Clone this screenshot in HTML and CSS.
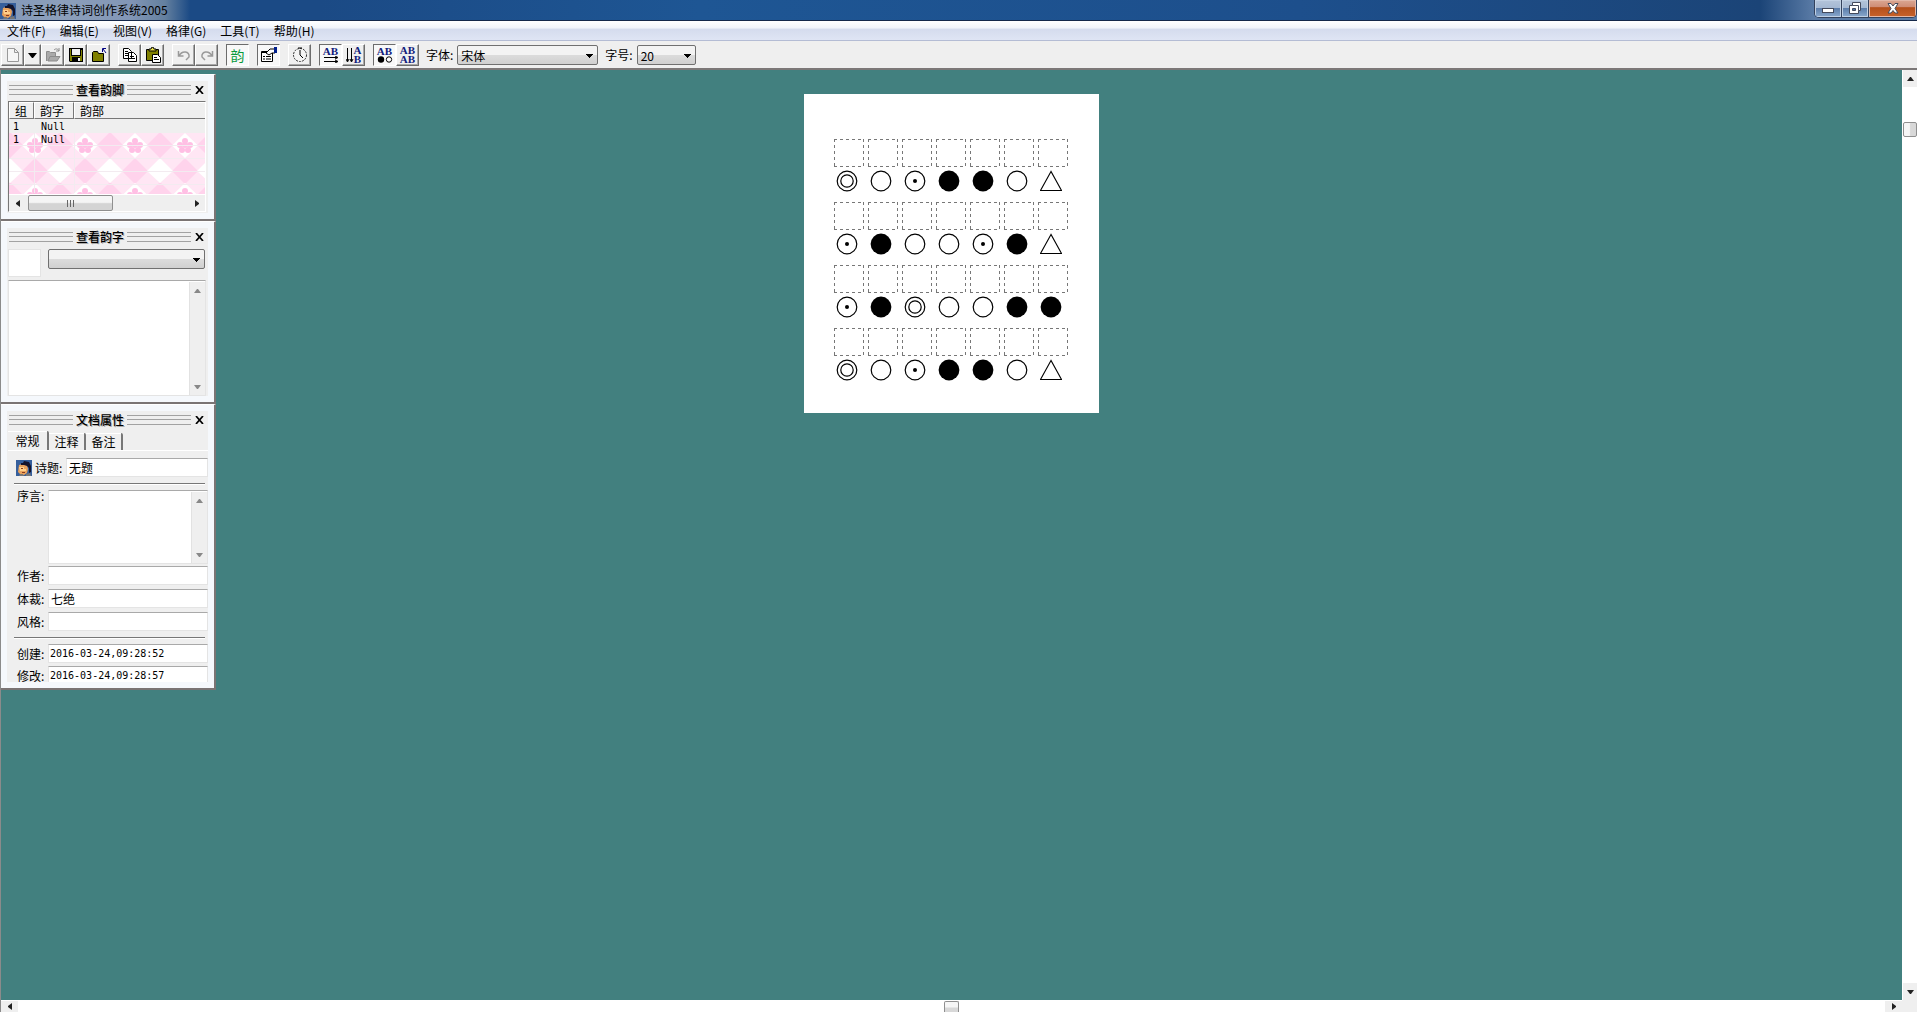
FILE: index.html
```html
<!DOCTYPE html>
<html lang="zh-CN">
<head>
<meta charset="utf-8">
<title>诗圣格律诗词创作系统2005</title>
<link rel="stylesheet" href="styles.css">
</head>
<body>
<svg class="defs" aria-hidden="true">
  <symbol id="poet" viewBox="0 0 16 16"><path fill="#365f9c" d="M0 0h16v16H0z"/><path fill="#e9a25c" d="M3 5l3-1 5 1 1 4-1 4-3 2H5l-3-3z"/><path fill="#ffd08a" d="M3 7h5v2h2v2H4z"/><path fill="#14142c" d="M5 3l2 0 1-2 5 1 2 4v6l-2 1V8l-2-2-3-1-3 0z"/><path fill="#8a3c1e" d="M5 8h2v1H5zM6 12h3v1H6z"/><path fill="#777" d="M4 14h3l1 2H3zM10 14l4-1 1 3h-5z"/></symbol>
  <symbol id="up" viewBox="0 0 7 4"><path d="M3 0h1l3 4H0z"/></symbol>
  <symbol id="down" viewBox="0 0 7 4"><path d="M0 0h7L4 4H3z"/></symbol>
  <symbol id="left" viewBox="0 0 4 7"><path d="M4 0v7L0 4V3z"/></symbol>
  <symbol id="right" viewBox="0 0 4 7"><path d="M0 0v7l4-3V3z"/></symbol>
  <symbol id="x" viewBox="0 0 9 8"><path fill="none" stroke="#000" stroke-width="1.700" d="M1 0l7 8M8 0L1 8"/></symbol>
  <symbol id="ring" viewBox="0 0 22 22"><circle cx="11" cy="11" r="9.800" fill="none" stroke="#000" stroke-width="1.200"/></symbol>
  <symbol id="double" viewBox="0 0 22 22"><g fill="none" stroke="#000" stroke-width="1.200"><circle cx="11" cy="11" r="9.800"/><circle cx="11" cy="11" r="6.200"/></g></symbol>
  <symbol id="dot" viewBox="0 0 22 22"><circle cx="11" cy="11" r="9.800" fill="none" stroke="#000" stroke-width="1.200"/><circle cx="11" cy="11" r="2"/></symbol>
  <symbol id="full" viewBox="0 0 22 22"><circle cx="11" cy="11" r="10.400"/></symbol>
  <symbol id="tri" viewBox="0 0 22 22"><path d="M11 1.500L.5 20.500h21z" fill="none" stroke="#000" stroke-width="1.100"/></symbol>
</svg>

<div class="app">
  <header class="titlebar">
    <svg class="ic16"><use href="#poet"/></svg>
    <h1>诗圣格律诗词创作系统2005</h1>
    <div class="winbtns">
      <button class="min" aria-label="最小化"><svg width="12" height="6"><rect x=".5" y=".5" width="11" height="4" fill="#fff" stroke="#444a5c"/></svg></button>
      <button class="max" aria-label="还原"><svg width="13" height="13"><path fill="#fff" stroke="#444a5c" d="M3.500.500h8v8h-2v3h-9v-8h3z"/><path fill="none" stroke="#444a5c" d="M3.500 3.500h6v5"/><path fill="#4a78b0" stroke="#444a5c" d="M3.500 6.500h3v2h-3z"/></svg></button>
      <button class="cls" aria-label="关闭"><svg width="12" height="11"><path fill="#fff" stroke="#444a5c" d="M1 .5h3l2 2.500 2-2.500h3L8 5.500l3 4.500H8L6 7.500 4 10H1l3-4.500z"/></svg></button>
    </div>
  </header>

  <nav class="menu">
    <button>文件(F)</button><button>编辑(E)</button><button>视图(V)</button><button>格律(G)</button><button>工具(T)</button><button>帮助(H)</button>
  </nav>

  <div class="toolbar">
    <div class="group">
      <button class="tb" aria-label="新建"><svg width="16" height="16"><path d="M2.500 1.500h7l4 4v9h-11zM9.500 1.500v4h4" fill="#f6f6f6" stroke="#999"/></svg></button>
      <button class="tb narrow" aria-label="新建类型"><svg width="9" height="5"><path d="M0 0h9L5 5H4z"/></svg></button>
      <button class="tb" aria-label="打开"><svg width="16" height="16"><path d="M1 14V5h4l1 1h5v3h4l-3 5z" fill="#aaa"/><path d="M1.500 14V4.500h3l1 1h5V9M3 14l2-4.500h10L12 14zM9 3c2-2 4-1 5 1m0-3v3h-3" fill="none" stroke="#8c8c8c"/></svg></button>
      <button class="tb" aria-label="保存"><svg width="16" height="16"><path d="M1 1h14v14H2l-1-1z"/><path fill="#808000" d="M2 2h1v7h10V3h1v11h-2v-4H4v4H2z"/><path fill="#efefef" d="M4 2h8v6H4z"/><path fill="#efefef" d="M10 11h2v3h-2z"/></svg></button>
      <button class="tb" aria-label="关闭文档"><svg width="16" height="16"><path fill="#808000" stroke="#000" d="M1.500 14.500v-9l1-1h4l1 2h5v8z"/><path d="M15 6l-3-4M11.500 5V1.500H15" fill="none" stroke="#000080"/></svg></button>
    </div>
    <div class="group">
      <button class="tb" aria-label="复制"><svg width="16" height="16"><path d="M1.500 1.500h5l3 3v7h-8zM6.500 5.500h5l3 3v6h-8z" fill="#fff" stroke="#000"/><path d="M3 4.500h3M3 6.500h3M3 8.500h3M8 9.500h4M8 11.500h5" stroke="#000"/></svg></button>
      <button class="tb" aria-label="粘贴"><svg width="16" height="16"><path d="M1.500 2.500h12v11h-12z" fill="#808000" stroke="#000"/><path d="M4 4V2h2l1-2h1l1 2h2v2z" fill="#e7e04a" stroke="#000"/><path d="M7.500 7.500h5l3 3v5h-8z" fill="#fff" stroke="#000"/><path d="M9 10.500h3M9 12.500h5" stroke="#000"/></svg></button>
    </div>
    <div class="group">
      <button class="tb" aria-label="撤销"><svg width="16" height="16"><path d="M2.500 4v5h5M3 9c3-6 11-5 10 1l-3 3" fill="none" stroke="#999" stroke-width="1.500"/></svg></button>
      <button class="tb" aria-label="重做"><svg width="16" height="16"><path d="M13.500 4v5h-5M13 9C10 3 2 4 3 10l3 3" fill="none" stroke="#999" stroke-width="1.500"/></svg></button>
    </div>
    <div class="group"><button class="tb on rhyme">韵</button></div>
    <div class="group"><button class="tb on" aria-label="属性"><svg width="18" height="16"><path d="M1.500 4.500h11v10h-11z" fill="#fff" stroke="#000"/><path d="M1 5.500h12M3 9.500h2M6 9.500h5M3 12h2M6 12h5" stroke="#000"/><path d="M6 6l4-4h5v4h-3l-3 2z" fill="#fff" stroke="#000"/><path fill="#001e8c" d="M14 0h3v6h-3z"/></svg></button></div>
    <div class="group"><button class="tb" aria-label="时间"><svg width="16" height="16"><circle cx="8" cy="8" r="6.500" fill="#f4f4f4" stroke="#333" stroke-dasharray="2 1"/><path d="M8 3v5l3 3M6 1h4" fill="none" stroke="#000"/></svg></button></div>
    <div class="group">
      <button class="tb on ab" aria-label="横排"><span>AB</span><svg width="16" height="7"><path d="M1 1.500h13M1 5.500h13M12 0l3 1.500L12 3M12 4l3 1.500L12 7" fill="none" stroke="#000"/></svg></button>
      <button class="tb ab side" aria-label="竖排"><svg width="8" height="16"><path d="M1.500 1v13M5.500 1v13M0 12l1.500 3L3 12M4 12l1.500 3L7 12" fill="none" stroke="#000"/></svg><span>A<br>B</span></button>
    </div>
    <div class="group">
      <button class="tb on ab" aria-label="显示格律"><span>AB</span><svg width="16" height="7"><circle cx="4" cy="3.500" r="3.200"/><circle cx="12" cy="3.500" r="2.700" fill="#fff" stroke="#000"/></svg></button>
      <button class="tb ab" aria-label="仅显示文字"><span>AB<br>AB</span></button>
    </div>
    <label for="font">字体:</label>
    <select id="font" class="combo font"><option>宋体</option></select>
    <label for="size">字号:</label>
    <select id="size" class="combo size"><option>20</option></select>
  </div>

  <main class="work">
    <div class="canvas">
      <article class="sheet" id="sheet"></article>
    </div>

    <aside class="dock">
      <section class="panel">
        <div class="inner first">
          <header class="cap"><i></i><h2>查看韵脚</h2><i></i><button aria-label="关闭"><svg width="9" height="8"><use href="#x"/></svg></button></header>
          <div class="list">
            <div class="view">
              <svg class="paper" aria-hidden="true">
                <pattern id="pink" width="50" height="50" x="1" y="0" patternUnits="userSpaceOnUse">
                  <path fill="#ffe6f4" d="M0 0h50v50H0z"/>
                  <path fill="#ffd3ec" d="M0-1l13 13L0 25zM50-1L37 12l13 13zM25 25l13 13-13 13-13-13z"/>
                  <path fill="#fff" d="M25 0l13 12.500L25 25 12 12.500zM0 25l13 13L0 50zM50 25L37 38l13 12z"/>
                  <g fill="#ffbfe4"><circle cx="25" cy="8" r="3"/><circle cx="20" cy="12" r="3"/><circle cx="30" cy="12" r="3"/><circle cx="22" cy="17" r="3"/><circle cx="28" cy="17" r="3"/><circle cx="25" cy="12" r="3"/></g>
                </pattern>
                <rect width="100%" height="100%" fill="url(#pink)"/>
                <path d="M0 12.500h200M0 25.500h200M0 38.500h200M0 51.500h200M25.500 0v60M65.500 0v60" stroke="#f3ebf0"/>
              </svg>
              <table>
                <thead><tr><th class="c1">组</th><th class="c2">韵字</th><th>韵部</th></tr></thead>
                <tbody><tr class="sel"><td>1</td><td>Null</td><td></td></tr><tr><td>1</td><td>Null</td><td></td></tr></tbody>
              </table>
            </div>
            <div class="hbar small">
              <button aria-label="向左"><svg width="4" height="7"><use href="#left"/></svg></button>
              <div class="track"><div class="thumb"><svg width="9" height="7"><path d="M1.500 0v7M4.500 0v7M7.500 0v7" stroke="#666"/></svg></div></div>
              <button aria-label="向右"><svg width="4" height="7"><use href="#right"/></svg></button>
            </div>
          </div>
        </div>
      </section>

      <section class="panel">
        <div class="inner second">
          <header class="cap"><i></i><h2>查看韵字</h2><i></i><button aria-label="关闭"><svg width="9" height="8"><use href="#x"/></svg></button></header>
          <div class="pick"><input class="char" aria-label="韵字"><select class="combo" aria-label="韵部"><option></option></select></div>
          <div class="memo tall"><textarea aria-label="同韵字"></textarea><div class="vbar dim"><button aria-label="向上"><svg width="7" height="4"><use href="#up"/></svg></button><button aria-label="向下"><svg width="7" height="4"><use href="#down"/></svg></button></div></div>
        </div>
      </section>

      <section class="panel">
        <div class="inner third">
          <header class="cap"><i></i><h2>文档属性</h2><i></i><button aria-label="关闭"><svg width="9" height="8"><use href="#x"/></svg></button></header>
          <div class="tabs"><button class="cur">常规</button><button>注释</button><button>备注</button></div>
          <div class="form">
            <div class="field title"><svg class="ic16"><use href="#poet"/></svg><label for="t">诗题:</label><input id="t" value="无题"></div>
            <hr>
            <div class="field top"><label for="p">序言:</label><div class="memo"><textarea id="p"></textarea><div class="vbar dim"><button aria-label="向上"><svg width="7" height="4"><use href="#up"/></svg></button><button aria-label="向下"><svg width="7" height="4"><use href="#down"/></svg></button></div></div></div>
            <div class="field"><label for="a">作者:</label><input id="a"></div>
            <div class="field"><label for="g">体裁:</label><input id="g" value="七绝"></div>
            <div class="field"><label for="s">风格:</label><input id="s"></div>
            <hr>
            <div class="field date"><label for="c">创建:</label><input id="c" value="2016-03-24,09:28:52"></div>
            <div class="field date"><label for="m">修改:</label><input id="m" value="2016-03-24,09:28:57"></div>
          </div>
        </div>
      </section>
    </aside>

    <div class="vbar main">
      <button aria-label="向上"><svg width="7" height="4"><use href="#up"/></svg></button>
      <div class="track"><div class="thumb"></div></div>
      <button aria-label="向下"><svg width="7" height="4"><use href="#down"/></svg></button>
    </div>
    <div class="hbar main">
      <button aria-label="向左"><svg width="4" height="7"><use href="#left"/></svg></button>
      <div class="track"><div class="thumb"></div></div>
      <button aria-label="向右"><svg width="4" height="7"><use href="#right"/></svg></button>
    </div>
  </main>
</div>
<script src="sheet.js"></script>
</body>
</html>
```
FILE: sheet.js
```js
// Tone pattern of a seven-character quatrain, one symbol id per character.
const lines = [
  ['double', 'ring', 'dot', 'full', 'full', 'ring', 'tri'],
  ['dot', 'full', 'ring', 'ring', 'dot', 'full', 'tri'],
  ['dot', 'full', 'double', 'ring', 'ring', 'full', 'full'],
  ['double', 'ring', 'dot', 'full', 'full', 'ring', 'tri']
];
document.getElementById('sheet').innerHTML = lines.map(line =>
  '<div class="verse">' + line.map(tone =>
    `<div class="slot"><svg class="cell" width="30" height="28"><path d="M0 .5h30M0 27.5h30M.5 0v28M29.5 0v28"/></svg><svg class="tone" width="22" height="22"><use href="#${tone}"/></svg></div>`
  ).join('') + '</div>').join('');
```
FILE: styles.css
```css
* { box-sizing: border-box; }
body { margin: 0; font: 12px/16px "Noto Sans CJK SC", sans-serif; color: #000; background: #efefef; }
h1, h2 { margin: 0; font-size: 12px; font-weight: 400; }
button, input, select, textarea { font: inherit; color: inherit; margin: 0; padding: 0; border: 0; border-radius: 0; background: none; }
button svg, .field svg { display: block; }
textarea { resize: none; display: block; }
.defs { position: absolute; width: 0; height: 0; }
.ic16 { width: 16px; height: 16px; flex: none; }
.app { display: flex; flex-direction: column; height: 100vh; overflow: hidden; }

/* title bar */
.titlebar { display: flex; align-items: flex-start; height: 21px; flex: none; border-bottom: 1px solid #14284a;
  background: linear-gradient(90deg, #8298b8 0, #8c9fbb 60px, #8296b6 130px, #64809f 165px, #1b4a85 190px, #1b4a85 320px, #1e5694 700px, #1d4f8c 1300px, #1b4477 1760px, #5a7ba6 1814px); }
.titlebar .ic16 { margin: 3px 5px 0 0; }
.titlebar h1 { flex: 1; line-height: 19px; }
.winbtns { display: flex; height: 18px; border: 1px solid #33415c; border-top: 0; border-radius: 0 0 5px 5px; overflow: hidden; }
.winbtns button { display: flex; align-items: center; justify-content: center; width: 27px; border-right: 1px solid #33415c; box-shadow: inset 0 0 0 1px #c0d0e4;
  background: linear-gradient(#b4c4da 0, #a3b7d2 50%, #5d7eab 50%, #8ba9cd); }
.winbtns .min { align-items: flex-end; padding-bottom: 3px; }
.winbtns .cls { width: 47px; border: 0; box-shadow: inset 0 0 0 1px #e3b8a8; background: linear-gradient(#dba792 0, #cf8d76 40%, #b4501c 45%, #c8622a); }

/* menu and toolbar */
.menu { display: flex; height: 20px; flex: none; border-bottom: 1px solid #b4bcd4; background: linear-gradient(#fff 0, #f2f5fb 35%, #d5dcee 45%, #dfe5f4); }
.menu button { padding: 0 7px; line-height: 20px; }
.toolbar { display: flex; align-items: center; height: 29px; flex: none; padding: 1px 0 0 1px; border-bottom: 2px solid #7c7878; }
.group { display: flex; margin-right: 8px; }
.tb { display: flex; align-items: center; justify-content: center; width: 23px; height: 22px; border: 1px solid; border-color: #fff #6c6c6c #6c6c6c #fff; box-shadow: inset -1px -1px #a8a8a8; }
.tb.narrow { width: 17px; }
.tb.on { border-color: #6c6c6c #fff #fff #6c6c6c; box-shadow: none; background: #f8f8f8; }
.rhyme { color: #089a3c; font-size: 14px; }
.ab { flex-direction: column; font: bold 11px/9px "Liberation Serif", serif; color: #10207c; }
.ab.side { flex-direction: row; }
.toolbar label { margin-right: 4px; padding-left: 7px; }
.toolbar .group:last-of-type { margin-right: 0; }
.combo { appearance: none; height: 20px; padding: 0 3px; border: 1px solid #707070; border-radius: 2px; line-height: 17px;
  background: linear-gradient(#000, #000) right 4px top 8px / 7px 1px no-repeat, linear-gradient(#000, #000) right 5px top 9px / 5px 1px no-repeat, linear-gradient(#000, #000) right 6px top 10px / 3px 1px no-repeat, linear-gradient(#000, #000) right 7px top 11px / 1px 1px no-repeat, linear-gradient(#f3f3f3 50%, #dcdcdc 50%, #d0d0d0); }
.combo.font { width: 141px; }
.combo.size { width: 59px; }

/* work area: canvas, dock and scroll bars share one grid */
.work { flex: 1; min-height: 0; display: grid; grid-template: minmax(0, 1fr) 12px / minmax(0, 1fr) 15px; border-left: 1px solid #8b8b8b; background: #efefef; }
.canvas { grid-area: 1 / 1; display: flex; justify-content: center; align-items: flex-start; padding-top: 24px; background: #42807f; }
.sheet { padding: 45px 31px 30px 30px; background: #fff; display: grid; gap: 8px; }
.verse { display: flex; gap: 4px; }
.slot { width: 30px; height: 55px; }
.slot svg { display: block; }
.cell path { fill: none; stroke: #777; stroke-dasharray: 3 3; }
.tone { margin: 3px 0 0 2px; }

.dock { grid-area: 1 / 1; justify-self: start; width: 215px; padding-top: 4px; }
.panel { padding: 6px; background: #f5f8fc; border: 1px solid #fff; border-width: 1px 2px 2px 0; border-right-color: #7a7474; border-bottom-color: #7a7474; }
.inner { background: #efefef; padding: 0 2px 0 1px; }
.cap { display: flex; align-items: center; gap: 2px; height: 20px; padding-left: 1px; padding-bottom: 2px; }
.cap i { flex: 1; height: 10px; border: 1px solid #a2a2a2; border-width: 1px 0; background: linear-gradient(#a2a2a2, #a2a2a2) 0 3px / 100% 1px no-repeat; }
.cap h2 { padding: 0 1px; text-shadow: 1px 1px #aaa; line-height: 18px; font-weight: 500; }
.cap button { width: 13px; height: 14px; padding-left: 2px; display: flex; align-items: center; }
.first { height: 132px; }
.second { height: 168px; }
.third { height: 271px; overflow: hidden; padding-right: 0; }
.third .cap { margin-right: 2px; }

.list { height: 111px; border: 1px solid #777; border-color: #777 #fff #fff #777; background: #fff; display: flex; flex-direction: column; }
.view { flex: 1; display: grid; grid-template: 92px / 100%; }
.paper { grid-area: 1 / 1; align-self: end; width: 100%; height: 61px; }
table { grid-area: 1 / 1; align-self: start; width: 100%; border-collapse: separate; border-spacing: 0; table-layout: fixed; }
th { height: 17px; padding: 0 0 0 5px; text-align: left; font-weight: 400; line-height: 15px; background: #efefef; border: 1px solid; border-color: #fff #777 #777 #fff; }
th:last-child { border-right: 0; }
.c1 { width: 25px; }
.c2 { width: 40px; }
td { height: 13px; padding: 0 0 0 7px; font: 10px/13px "DejaVu Sans Mono", monospace; }
td:first-child { padding-left: 4px; }
.sel td { height: 14px; background: #efefef; }

/* scroll bars */
.hbar, .vbar { display: flex; background: #efefef; }
.vbar { flex-direction: column; justify-content: space-between; }
.hbar button, .vbar button { display: flex; align-items: center; justify-content: center; flex: none; background: #efefef; fill: #222; }
.hbar button { width: 17px; }
.vbar button { height: 17px; }
.track { flex: 1; display: flex; }
.thumb { border: 1px solid #8f8f8f; border-radius: 2px; background: linear-gradient(90deg, #f6f6f6 45%, #d8d8d8 55%); }
.small { height: 16px; flex: none; }
.small .thumb { width: 85px; margin-left: 2px; display: flex; align-items: center; justify-content: center; background: linear-gradient(#f5f5f5 45%, #d4d4d4 55%); }
.dim { width: 16px; flex: none; border-left: 1px solid #e2e2e2; }
.vbar.dim button { fill: #888; }
.vbar.main { grid-area: 1 / 2; background: #fff; }
.vbar.main button { margin-left: 1px; }
.vbar.main .track { padding: 35px 0 0 1px; }
.vbar.main .thumb { width: 14px; height: 15px; }
.hbar.main { grid-area: 2 / 1; background: #fff; }
.hbar.main .track { justify-content: center; }
.hbar.main button { margin-top: 1px; }
.hbar.main .thumb { width: 15px; margin-top: 1px; border-bottom: 0; border-radius: 2px 2px 0 0; background: linear-gradient(#f6f6f6 50%, #d8d8d8 60%); }

/* form controls */
input, .memo { background: #fff; border: 1px solid #e4e4e4; border-top-color: #a9a9a9; }
.pick { display: flex; justify-content: space-between; align-items: flex-start; padding: 1px 1px 0 0; }
.pick .char { width: 33px; height: 28px; border-color: #e4e4e4; }
.pick .combo { width: 157px; }
.memo { display: flex; min-width: 0; padding-top: 1px; }
.memo textarea { flex: 1; width: 0; min-width: 0; height: 100%; }
.tall { height: 116px; margin-top: 3px; }
.tabs { display: flex; align-items: flex-end; height: 20px; border-bottom: 1px solid #fff; }
.tabs button { width: 37px; height: 17px; line-height: 15px; border: 2px solid #777; border-width: 0 2px 0 0; border-radius: 0 2px 0 0; box-shadow: inset 0 1px #fff; }
.tabs .cur { width: 41px; height: 19px; }
.form { padding: 7px 0 0 6px; }
.field { display: flex; align-items: center; height: 19px; margin-bottom: 4px; }
.field label { width: 34px; padding-left: 3px; flex: none; line-height: 18px; }
.field input { flex: 1; min-width: 0; height: 19px; padding: 0 2px; line-height: 16px; }
.field.title { padding-left: 2px; }
.field.title label { padding-left: 3px; }
.field.top { align-items: flex-start; height: 74px; margin-bottom: 2px; }
.field.top label { line-height: 12px; }
.field.top .memo { flex: 1; height: 74px; }
.field.date { margin-bottom: 3px; }
.field.date input { padding: 0 1px; font: 10px/16px "DejaVu Sans Mono", monospace; }
hr { height: 2px; margin: 6px 3px 5px 0; border: 0; border-top: 1px solid #777; border-bottom: 1px solid #fff; }
```
